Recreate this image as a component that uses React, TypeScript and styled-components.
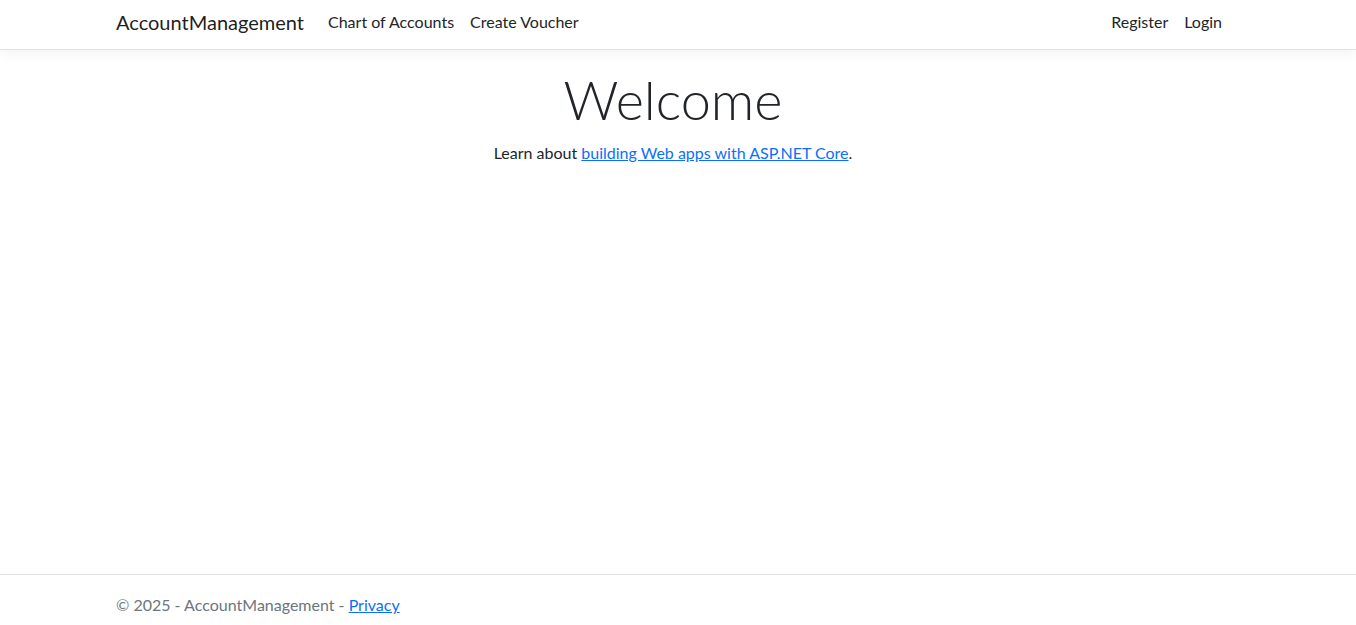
import React from "react";
import styled, { createGlobalStyle } from "styled-components";

const GlobalStyle = createGlobalStyle`
  *, *::before, *::after { box-sizing: border-box; }
  html, body { margin: 0; padding: 0; }
  body {
    font-family: "Segoe UI", Lato, "Liberation Sans", sans-serif;
    font-size: 16px;
    line-height: 1.5;
    color: #212529;
    background: #fff;
  }
`;

const Page = styled.div`
  min-height: 625px;
  display: flex;
  flex-direction: column;
`;

const Container = styled.div`
  width: 100%;
  max-width: 1140px;
  margin: 0 auto;
  padding: 0 18px 0 8px;
`;

const Header = styled.header`
  background: #fff;
  border-bottom: 1px solid #dee2e6;
  box-shadow: 0 4px 12px rgba(0, 0, 0, 0.05);
`;

const NavBar = styled(Container)`
  height: 49px;
  padding-bottom: 6px;
  display: flex;
  align-items: center;
`;

const Brand = styled.a`
  font-size: 20px;
  line-height: 30px;
  color: rgba(0, 0, 0, 0.9);
  text-decoration: none;
  margin-right: 16px;
  white-space: nowrap;
`;

const NavList = styled.ul<{ $end?: boolean }>`
  display: flex;
  list-style: none;
  margin: 0;
  padding: 0;
  margin-left: ${(p) => (p.$end ? "auto" : "0")};
`;

const NavLink = styled.a`
  display: block;
  padding: 8px;
  color: #212529;
  text-decoration: none;
  font-size: 16px;
  line-height: 24px;
  white-space: nowrap;
`;

const Main = styled.main`
  flex: 1;
  padding-top: 16px;
`;

const Hero = styled.div`
  text-align: center;
`;

const Title = styled.h1`
  font-size: 54px;
  font-weight: 300;
  line-height: 1.2;
  margin: 2px 0 8px;
  color: #212529;
`;

const Lead = styled.p`
  margin: 0;
`;

const Link = styled.a`
  color: #0d6efd;
  text-decoration: underline;
`;

const Footer = styled.footer`
  border-top: 1px solid #dee2e6;
  height: 51px;
  overflow: visible;
`;

const FooterInner = styled(Container)`
  line-height: 60px;
  color: #6c757d;
  white-space: nowrap;
`;

export default function App() {
  return (
    <>
      <GlobalStyle />
      <Page>
        <Header>
          <NavBar as="nav">
            <Brand href="#">AccountManagement</Brand>
            <NavList>
              <li><NavLink href="#">Chart of Accounts</NavLink></li>
              <li><NavLink href="#">Create Voucher</NavLink></li>
            </NavList>
            <NavList $end>
              <li><NavLink href="#">Register</NavLink></li>
              <li><NavLink href="#">Login</NavLink></li>
            </NavList>
          </NavBar>
        </Header>
        <Main>
          <Container>
            <Hero>
              <Title>Welcome</Title>
              <Lead>
                Learn about <Link href="#">building Web apps with ASP.NET Core</Link>.
              </Lead>
            </Hero>
          </Container>
        </Main>
        <Footer>
          <FooterInner>
            © 2025 - AccountManagement - <Link href="#">Privacy</Link>
          </FooterInner>
        </Footer>
      </Page>
    </>
  );
}
